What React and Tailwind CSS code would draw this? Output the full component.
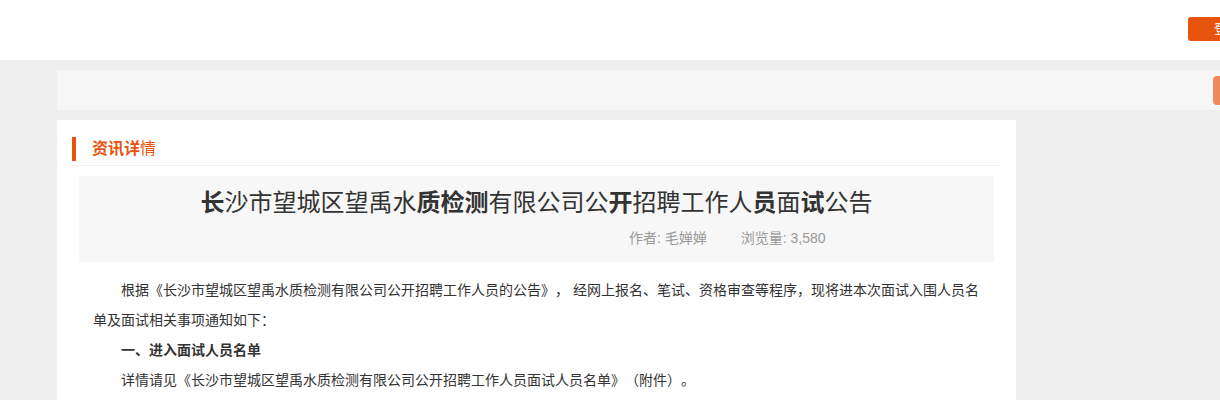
const font = { fontFamily: '"Liberation Sans", "Noto Sans CJK SC", sans-serif' };

const App = () => {
  return (
    <div className="w-full overflow-hidden bg-[#efeeee] min-h-[400px] [text-spacing-trim:space-all]" style={font}>
      {/* Header */}
      <div className="bg-white h-[60px]">
        <div className="w-[1209px] ml-[57px] h-full flex items-start justify-end pt-[17px]">
          <button className="w-[78px] h-[24px] rounded-[3px] bg-[#e8530e] text-white text-[13px] leading-[24px]">
            登录
          </button>
        </div>
      </div>

      <div className="w-[1200px] ml-[57px] pt-[10px]">
        {/* Breadcrumb bar */}
        <div className="h-[40px] bg-[#f6f6f6] flex items-center justify-end pr-[14px]">
          <div className="w-[30px] h-[29px] rounded-[4px] bg-[#ef8a5c]" />
        </div>

        <div className="flex mt-[10px]">
          {/* Main card */}
          <div className="w-[959px] bg-white px-[15px] pb-[20px]">
            <div className="flex items-center h-[46px] pt-[17px] pb-[4px] border-b border-[#f1f1f1]">
              <div className="w-[4px] h-[24px] bg-[#e8530e]" />
              <div className="ml-[16px] text-[16px] text-[#e8530e] leading-[24px]">
                <b>资讯详</b>情
              </div>
            </div>

            <div className="mx-[7px] mt-[10px] bg-[#f7f7f7] pt-[9px] pb-[14px]">
              <h1 className="text-center text-[24px] leading-[36px] text-[#333]">
                <b>长</b>沙市望城区望禹水<b>质检测</b>有限公司公<b>开</b>招聘工作人<b>员</b>面<b>试</b>公告
              </h1>
              <div className="mt-[7px] pl-[550px] flex text-[14px] leading-[20px] text-[#999]">
                <span>作者: 毛婵婵</span>
                <span className="ml-[34px]">浏览量: 3,580</span>
              </div>
            </div>

            <div className="mt-[13px] pl-[21px] pr-[20px] text-[14px] leading-[30px] text-[#333]">
              <p className="indent-[28px]">
                根据《长沙市望城区望禹水质检测有限公司公开招聘工作人员的公告》， 经网上报名、笔试、资格审查等程序，现将进本次面试入围人员名单及面试相关事项通知如下：
              </p>
              <p className="indent-[28px] font-bold">一、进入面试人员名单</p>
              <p className="indent-[28px]">
                详情请见《长沙市望城区望禹水质检测有限公司公开招聘工作人员面试人员名单》（附件）。
              </p>
            </div>
          </div>
        </div>
      </div>
    </div>
  );
};

export default App;
